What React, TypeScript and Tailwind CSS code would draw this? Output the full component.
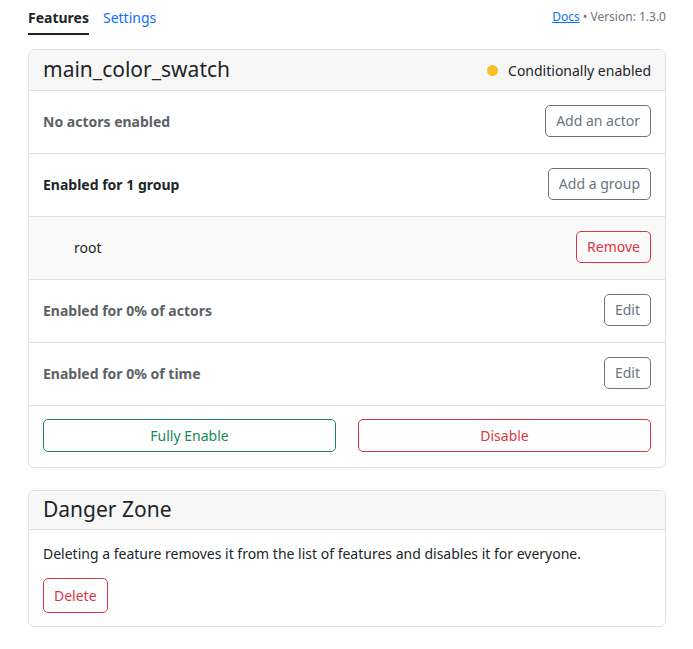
import React from "react";

const Row = ({ children, bg = "" }: { children: React.ReactNode; bg?: string }) => (
  <div className={`flex h-[63px] items-center justify-between border-b border-[#dee2e6] px-[14px] pb-[2px] ${bg}`}>{children}</div>
);

const Btn = ({ children, color }: { children: React.ReactNode; color: "gray" | "red" }) => (
  <button
    className={`h-[32px] rounded-[5px] border px-[10px] text-[14px] leading-none ${
      color === "gray" ? "border-[#6c757d] text-[#6c757d]" : "border-[#dc3545] text-[#dc3545]"
    }`}
  >
    {children}
  </button>
);

export default function App() {
  return (
    <div className="min-h-[649px] bg-white pl-[28px] pr-[27px] text-[#212529]" style={{ fontFamily: '"Noto Sans", sans-serif' }}>
      <div className="flex items-start justify-between">
        <div className="flex gap-[14px] pt-[7px] text-[14px]">
          <div className="border-b-2 border-[#212529] pb-[5px] font-bold">Features</div>
          <div className="text-[#0d6efd]">Settings</div>
        </div>
        <div className="pt-[8px] text-[12px] text-[#6c757d]">
          <span className="text-[#0d6efd] underline">Docs</span> • Version: 1.3.0
        </div>
      </div>

      <div className="mt-[14px] overflow-hidden rounded-[6px] border border-[#dee2e6]">
        <div className="flex h-[41px] items-center justify-between border-b border-[#dee2e6] bg-[#f7f7f7] px-[14px]">
          <div className="text-[21px]">main_color_swatch</div>
          <div className="flex items-center gap-[10px] text-[14px]">
            <span className="inline-block h-[11px] w-[11px] rounded-full bg-[#fbbf2a]" />
            Conditionally enabled
          </div>
        </div>
        <Row>
          <div className="text-[14px] font-bold text-[#5c6166]">No actors enabled</div>
          <Btn color="gray">Add an actor</Btn>
        </Row>
        <Row>
          <div className="text-[14px] font-bold">Enabled for 1 group</div>
          <Btn color="gray">Add a group</Btn>
        </Row>
        <Row bg="bg-[#fafafa]">
          <div className="pl-[31px] text-[14px]">root</div>
          <Btn color="red">Remove</Btn>
        </Row>
        <Row>
          <div className="text-[14px] font-bold text-[#5c6166]">Enabled for 0% of actors</div>
          <Btn color="gray">Edit</Btn>
        </Row>
        <Row>
          <div className="text-[14px] font-bold text-[#5c6166]">Enabled for 0% of time</div>
          <Btn color="gray">Edit</Btn>
        </Row>
        <div className="flex gap-[22px] px-[14px] pb-[15px] pt-[13px]">
          <button className="h-[33px] flex-1 rounded-[5px] border border-[#198754] text-[14px] text-[#198754]">Fully Enable</button>
          <button className="h-[33px] flex-1 rounded-[5px] border border-[#dc3545] text-[14px] text-[#dc3545]">Disable</button>
        </div>
      </div>

      <div className="mt-[22px] overflow-hidden rounded-[6px] border border-[#dee2e6]">
        <div className="flex h-[39px] items-center border-b border-[#dee2e6] bg-[#f7f7f7] px-[14px]">
          <div className="text-[21px]">Danger Zone</div>
        </div>
        <div className="px-[14px] pb-[13px] pt-[13px]">
          <p className="text-[14px]">Deleting a feature removes it from the list of features and disables it for everyone.</p>
          <button className="mt-[14px] h-[35px] rounded-[5px] border border-[#dc3545] px-[10px] text-[14px] text-[#dc3545]">Delete</button>
        </div>
      </div>
    </div>
  );
}
